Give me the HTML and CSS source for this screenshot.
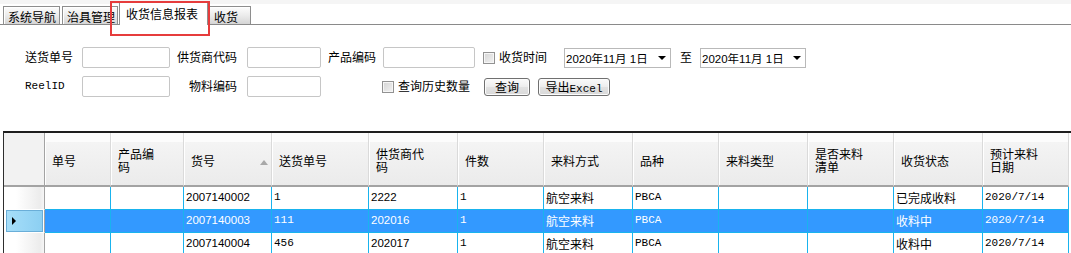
FILE: index.html
```html
<!DOCTYPE html>
<html lang="zh-CN">
<head>
  <meta charset="UTF-8" />
  <title>收货信息报表</title>
  <link rel="stylesheet" href="styles.css">
</head>
<body>

  <div class="tabbar">
    <div class="tab t1">系统导航</div>
    <div class="tab t2">治具管理</div>
    <div class="tab active">收货信息报表</div>
    <div class="tab t4">收货</div>
  </div>
  <!-- annotation box drawn over the active tab -->
  <div class="mark"></div>

  <div class="filters">
    <span class="lbl">送货单号</span>
    <input class="box" type="text" />
    <span class="lbl lbl-r">供货商代码</span>
    <input class="box" type="text" />
    <div class="line">
      <span class="lbl prod">产品编码</span>
      <input class="box w92" type="text" />
      <span class="chk first"></span><span>收货时间</span>
      <div class="date from">2020年11月 1日<span class="arrow"></span></div>
      <span class="to">至</span>
      <div class="date">2020年11月 1日<span class="arrow"></span></div>
    </div>

    <span class="lbl mono">ReelID</span>
    <input class="box" type="text" />
    <span class="lbl lbl-r">物料编码</span>
    <input class="box" type="text" />
    <div class="line">
      <span class="chk hist"></span><span>查询历史数量</span>
      <button class="btn b1">查询</button>
      <button class="btn b2">导出<span class="mono">Excel</span></button>
    </div>
  </div>

  <div class="grid-wrap">
    <table class="grid">
      <thead>
        <tr>
          <th class="rh"></th>
          <th>单号</th>
          <th>产品编<br>码</th>
          <th>货号<span class="sort"></span></th>
          <th>送货单号</th>
          <th>供货商代<br>码</th>
          <th>件数</th>
          <th>来料方式</th>
          <th>品种</th>
          <th>来料类型</th>
          <th>是否来料<br>清单</th>
          <th>收货状态</th>
          <th>预计来料<br>日期</th>
        </tr>
      </thead>
      <tbody>
        <tr>
          <td class="rh"></td>
          <td></td>
          <td></td>
          <td class="num">2007140002</td>
          <td class="mono">1</td>
          <td class="num">2222</td>
          <td class="mono">1</td>
          <td>航空来料</td>
          <td class="mono">PBCA</td>
          <td></td>
          <td></td>
          <td>已完成收料</td>
          <td class="mono">2020/7/14</td>
        </tr>
        <tr class="sel">
          <td class="rh"><div class="cur"></div></td>
          <td></td>
          <td></td>
          <td class="num">2007140003</td>
          <td class="mono">111</td>
          <td class="num">202016</td>
          <td class="mono">1</td>
          <td>航空来料</td>
          <td class="mono">PBCA</td>
          <td></td>
          <td></td>
          <td>收料中</td>
          <td class="mono">2020/7/14</td>
        </tr>
        <tr>
          <td class="rh"></td>
          <td></td>
          <td></td>
          <td class="num">2007140004</td>
          <td class="mono">456</td>
          <td class="num">202017</td>
          <td class="mono">1</td>
          <td>航空来料</td>
          <td class="mono">PBCA</td>
          <td></td>
          <td></td>
          <td>收料中</td>
          <td class="mono">2020/7/14</td>
        </tr>
      </tbody>
    </table>
  </div>

</body>
</html>
```

FILE: styles.css
```css
* {
  box-sizing: border-box;
}
html, body {
  margin: 0;
  height: 100%;
  overflow: hidden;
  background: #fff;
}
body {
  font: 12px/1.2 "Noto Sans CJK SC", "Liberation Sans", sans-serif;
  color: #000;
  position: relative;
}
.mono {
  font-family: "Liberation Mono", monospace;
  font-size: 11px;
}
.num {
  font-family: "Liberation Sans", sans-serif;
  font-size: 11.5px;
}

/* Tabs */
.tabbar {
  display: flex;
  align-items: flex-end;
  height: 25px;
  padding-left: 3px;
  border-bottom: 1px solid #8a8a8a;
  background: linear-gradient(#f5f5f5 0, #f5f5f5 4px, #fff 4px);
}
.tab {
  height: 18px;
  padding: 2px 0 0 4px;
  border: 1px solid #8e8e8e;
  border-bottom: 0;
  background: linear-gradient(#fdfdfd, #ebebeb 50%, #d5d5d5);
  box-shadow: inset 1px 1px #fff;
  line-height: 15px;
  white-space: nowrap;
}
.t1 {
  width: 57px;
  margin-right: 2px;
}
.t2 {
  width: 56px;
  margin-right: 1px;
}
.tab.active {
  width: 89px;
  height: 23px;
  margin-bottom: -1px;
  padding: 3px 0 0 6px;
  background: #fff;
  box-shadow: none;
}
.t4 {
  width: 43px;
  padding-left: 5px;
}
.mark {
  position: absolute;
  left: 110px;
  top: 1px;
  width: 100px;
  height: 35px;
  border: 2px solid #e63c3c;
}

/* Filters */
.filters {
  display: grid;
  grid-template-columns: 57px 88px 77px 74px auto;
  grid-auto-rows: 21px;
  row-gap: 8px;
  align-items: center;
  padding-left: 25px;
  margin-top: 22px;
}
.lbl-r {
  text-align: right;
  padding-right: 10px;
}
.box {
  width: 100%;
  height: 21px;
  margin: 0;
  padding: 0 2px;
  border: 1px solid #c6c6c6;
  border-radius: 2px;
  background: #fff;
}
.line {
  display: flex;
  align-items: center;
  height: 21px;
  white-space: nowrap;
}
.prod {
  width: 55px;
  margin-left: 7px;
}
.w92 {
  width: 92px;
}
.chk {
  width: 12px;
  height: 12px;
  margin-right: 4px;
  border: 1px solid #929292;
  background: linear-gradient(135deg, #d4d4d4, #f2f2f2);
  box-shadow: inset 0 0 0 1px #f6f6f6;
}
.chk.first {
  margin-left: 8px;
}
.chk.hist {
  margin-left: 61px;
}
.date {
  display: flex;
  align-items: center;
  width: 106px;
  height: 20px;
  padding-left: 1px;
  border: 1px solid #b9b9b9;
  background: #fff;
  font: 11.5px "Liberation Sans", "Noto Sans CJK SC", sans-serif;
}
.date.from {
  width: 107px;
  margin-left: 17px;
}
.arrow {
  margin-left: auto;
  margin-right: 4px;
  border-top: 4px solid #000;
  border-left: 4px solid transparent;
  border-right: 4px solid transparent;
}
.to {
  margin: 0 8px 0 9px;
}
.btn {
  height: 18px;
  padding: 0;
  border: 1px solid #707070;
  border-radius: 3px;
  background: linear-gradient(#fafafa, #ededed 50%, #e2e2e2 50%, #d9d9d9);
  box-shadow: inset 0 0 0 1px #fcfcfc;
  font: 12px/16px "Noto Sans CJK SC", sans-serif;
  color: #000;
}
.btn .mono {
  font-size: 11px;
}
.b1 {
  width: 46px;
  margin-left: 14px;
}
.b2 {
  width: 72px;
  margin-left: 8px;
}

/* Data grid */
.grid-wrap {
  margin: 34px 0 0 3px;
  height: 130px;
  overflow: hidden;
  border-top: 2px solid #1e1e1e;
  border-left: 1px solid #2e2e2e;
}
.grid {
  border-collapse: separate;
  border-spacing: 0;
  table-layout: fixed;
  width: 1065px;
}
.grid th, .grid td {
  padding: 0 0 0 2px;
  border-right: 1px solid #19b3ee;
  border-bottom: 1px solid #19b3ee;
  text-align: left;
  font-weight: normal;
  white-space: nowrap;
  overflow: hidden;
  vertical-align: middle;
}
.grid th {
  height: 54px;
  padding: 2px 0 0 7px;
  border-right-color: #dadada;
  border-bottom: 2px solid #a3a3a3;
  background: linear-gradient(#fcfcfc 0, #fcfcfc 9px, #f4f4f4 9px, #ebebeb 100%);
  box-shadow: inset 1px 0 #fff;
  line-height: 13px;
}
.grid td {
  height: 23px;
}
.grid th:nth-child(1) { width: 41px; }
.grid th:nth-child(2) { width: 66px; }
.grid th:nth-child(3) { width: 73px; }
.grid th:nth-child(4) { width: 88px; }
.grid th:nth-child(5) { width: 97px; }
.grid th:nth-child(6) { width: 89px; }
.grid th:nth-child(7) { width: 86px; }
.grid th:nth-child(8) { width: 89px; }
.grid th:nth-child(9) { width: 86px; }
.grid th:nth-child(10) { width: 89px; }
.grid th:nth-child(11) { width: 86px; }
.grid th:nth-child(12) { width: 89px; }
.grid th:nth-child(13) { width: 86px; }

.grid th.rh {
  background: #f2f2f2;
  border-right-color: #a3a3a3;
  box-shadow: none;
}
.grid td.rh {
  padding: 0;
  border-right-color: #a3a3a3;
  border-bottom-color: #fff;
  background: linear-gradient(to right, #fff 30%, #ececec 90%, #f6f6f6);
}
.sort {
  display: inline-block;
  margin-left: 45px;
  vertical-align: middle;
  border-bottom: 5px solid #a8a8a8;
  border-left: 4px solid transparent;
  border-right: 4px solid transparent;
}
.sel td {
  background: #3399ff;
  color: #fff;
}
.sel td.rh {
  padding: 0 0 0 2px;
  background: #fff;
}
.cur {
  height: 22px;
  width: 37px;
  border: 1px solid #6aaed8;
  background: linear-gradient(to right, #a6def9, #8ccff2);
  position: relative;
}
.cur::before {
  content: "";
  position: absolute;
  left: 5px;
  top: 6px;
  border-left: 4px solid #000;
  border-top: 4px solid transparent;
  border-bottom: 4px solid transparent;
}
```
